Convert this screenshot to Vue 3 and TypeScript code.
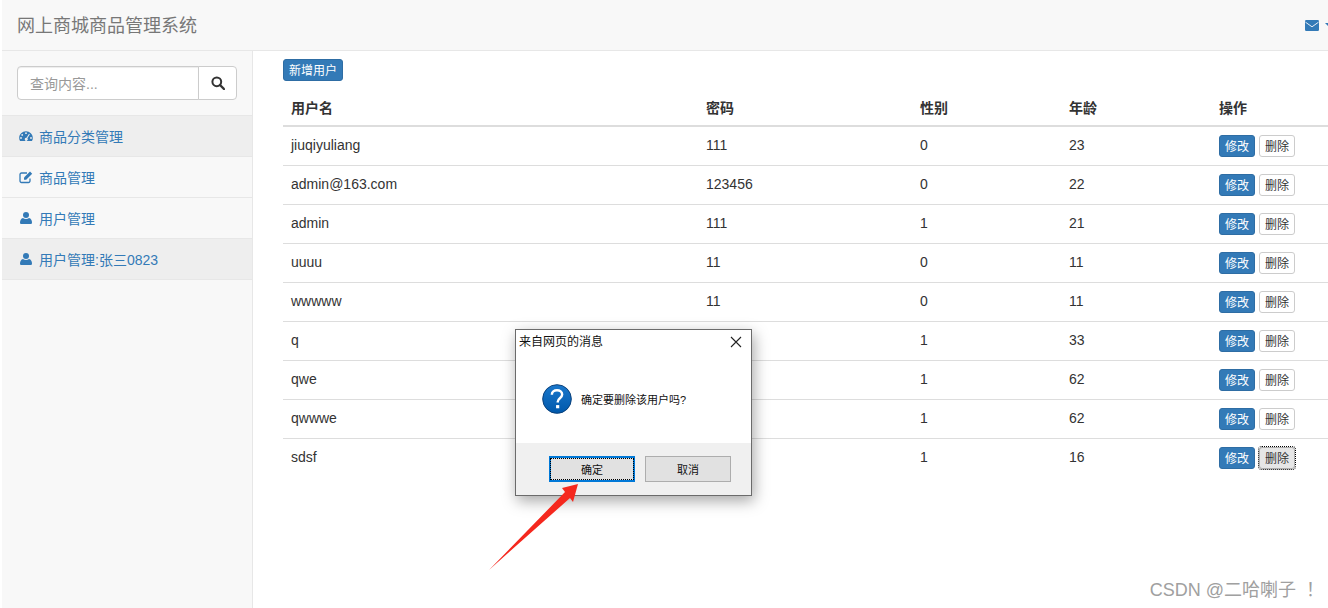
<template>
  <div class="page">
    <header class="navbar">
      <span class="brand">网上商城商品管理系统</span>
      <div class="nav-right">
        <svg class="mail-icon" width="14" height="11" viewBox="0 0 14 11">
          <rect width="14" height="11" rx="1.2" fill="#337ab7" />
          <path d="M0.5 2.2 7 6.8 13.5 2.2" fill="none" stroke="#e8eef5" stroke-width="1" />
        </svg>
        <span class="caret"></span>
      </div>
    </header>

    <div class="layout">
      <aside class="sidebar">
        <div class="search">
          <input type="text" placeholder="查询内容..." />
          <button class="search-btn" type="button">
            <svg width="14" height="14" viewBox="0 0 14 14">
              <circle cx="5.8" cy="5.8" r="4.4" fill="none" stroke="#333" stroke-width="2" />
              <path d="M9 9 13 13" stroke="#333" stroke-width="2.4" stroke-linecap="round" />
            </svg>
          </button>
        </div>
        <ul class="menu">
          <li v-for="item in menu" :key="item.label" :class="{ shaded: item.shaded }">
            <svg v-if="item.icon === 'gauge'" class="menu-icon" width="14" height="14" viewBox="0 0 14 14">
              <path
                fill-rule="evenodd"
                d="M7 2.2C3.2 2.2.2 5.200.2 8.900c0 1.200.3 2.200.9 3.100h11.800c.6-.9.9-1.900.9-3.100C13.800 5.200 10.800 2.200 7 2.200zM7 3.300a.9.9 0 1 1 0 1.800.9.9 0 0 1 0-1.800zM3.200 5a.9.9 0 1 1 0 1.800.9.9 0 0 1 0-1.800zM2 8.100a.9.9 0 1 1 0 1.800.9.9 0 0 1 0-1.800zM12 8.100a.9.900 0 1 1 0 1.800.9.9 0 0 1 0-1.800zM10 4.800l.9.400-2.500 4.100a1.500 1.500 0 1 1-.9-.5z"
                fill="#337ab7"
              />
            </svg>
            <svg v-else-if="item.icon === 'edit'" class="menu-icon" width="14" height="14" viewBox="0 0 14 14">
              <path d="M11 8.500V11a1.500 1.500 0 0 1-1.500 1.500H2.500A1.500 1.500 0 0 1 1 11V4.500A1.500 1.500 0 0 1 2.500 3H8" fill="none" stroke="#337ab7" stroke-width="1.300" />
              <path d="M5 7.500 11 1.500l2.200 2.200-6 6H5z" fill="#337ab7" />
            </svg>
            <svg v-else class="menu-icon" width="14" height="14" viewBox="0 0 14 14">
              <circle cx="7" cy="4" r="3" fill="#337ab7" />
              <path d="M2 13c-.8 0-1-.5-1-1.200C1 9.500 2 7.300 4 7c.8.700 1.800 1 3 1s2.200-.3 3-1c2 .3 3 2.500 3 4.800 0 .7-.2 1.200-1 1.200z" fill="#337ab7" />
            </svg>
            <span class="menu-label">{{ item.label }}</span>
          </li>
        </ul>
      </aside>

      <main class="main">
        <button class="btn primary add" type="button">新增用户</button>
        <table class="users">
          <colgroup>
            <col style="width: 415px" />
            <col style="width: 214px" />
            <col style="width: 149px" />
            <col style="width: 150px" />
            <col style="width: 120px" />
          </colgroup>
          <thead>
            <tr>
              <th>用户名</th>
              <th>密码</th>
              <th>性别</th>
              <th>年龄</th>
              <th>操作</th>
            </tr>
          </thead>
          <tbody>
            <tr v-for="(user, i) in users" :key="user.name">
              <td>{{ user.name }}</td>
              <td>{{ user.password }}</td>
              <td>{{ user.gender }}</td>
              <td>{{ user.age }}</td>
              <td>
                <div class="actions">
                  <button class="btn primary" type="button">修改</button>
                  <button class="btn plain" :class="{ focused: i === users.length - 1 }" type="button">删除</button>
                </div>
              </td>
            </tr>
          </tbody>
        </table>
      </main>
    </div>

    <!-- native confirm box lying over the page -->
    <div class="dialog">
      <div class="dialog-title">
        <span>来自网页的消息</span>
        <svg width="12" height="12" viewBox="0 0 12 12">
          <path d="M1 1 11 11M11 1 1 11" stroke="#222" stroke-width="1.100" />
        </svg>
      </div>
      <div class="dialog-body">
        <svg width="30" height="30" viewBox="0 0 32 32">
          <defs>
            <linearGradient id="q-fill" x1="0" y1="0" x2="0" y2="1">
              <stop offset="0" stop-color="#1a78cc" />
              <stop offset="1" stop-color="#0058ab" />
            </linearGradient>
          </defs>
          <circle cx="16" cy="16" r="15.300" fill="url(#q-fill)" stroke="#0b3f78" stroke-width="1" />
          <path d="M10.500 11.500c0-3 2.400-4.800 5.500-4.800 3.200 0 5.500 1.800 5.500 4.500 0 4-4.700 4-4.700 7.800v.8" fill="none" stroke="#fff" stroke-width="2.600" />
          <rect x="15" y="22.500" width="3.400" height="3.400" fill="#fff" />
        </svg>
        <span class="dialog-text">确定要删除该用户吗?</span>
      </div>
      <div class="dialog-footer">
        <button class="win-btn default" type="button"><span>确定</span></button>
        <button class="win-btn" type="button"><span>取消</span></button>
      </div>
    </div>

    <svg class="arrow" width="100" height="95" viewBox="0 0 100 95">
      <path d="M1 91 77 13 74 9 90 5 85 23 82 19z" fill="#f5281e" />
    </svg>

    <div class="watermark">CSDN @二哈喇子 <span class="bang">！</span></div>
  </div>
</template>

<script setup lang="ts">
interface MenuItem {
  label: string
  icon: 'gauge' | 'edit' | 'user'
  shaded: boolean
}

interface User {
  name: string
  password: string
  gender: number
  age: number
}

const menu: MenuItem[] = [
  { label: '商品分类管理', icon: 'gauge', shaded: true },
  { label: '商品管理', icon: 'edit', shaded: false },
  { label: '用户管理', icon: 'user', shaded: false },
  { label: '用户管理:张三0823', icon: 'user', shaded: true }
]

const users: User[] = [
  { name: 'jiuqiyuliang', password: '111', gender: 0, age: 23 },
  { name: 'admin@163.com', password: '123456', gender: 0, age: 22 },
  { name: 'admin', password: '111', gender: 1, age: 21 },
  { name: 'uuuu', password: '11', gender: 0, age: 11 },
  { name: 'wwwww', password: '11', gender: 0, age: 11 },
  { name: 'q', password: '11', gender: 1, age: 33 },
  { name: 'qwe', password: '11', gender: 1, age: 62 },
  { name: 'qwwwe', password: '11', gender: 1, age: 62 },
  { name: 'sdsf', password: '11', gender: 1, age: 16 }
]
</script>

<style>
html,
body {
  margin: 0;
  background: #fff;
}
</style>

<style scoped>
.page {
  position: relative;
  width: 1328px;
  height: 608px;
  padding-left: 2px;
  box-sizing: border-box;
  overflow: hidden;
  background: #fff;
  color: #333;
  font-family: "Liberation Sans", "Noto Sans CJK SC", sans-serif;
  font-size: 14px;
  line-height: 20px;
}

.navbar {
  display: flex;
  align-items: center;
  justify-content: space-between;
  height: 50px;
  padding: 0 0 0 15px;
  background: #f8f8f8;
  border-bottom: 1px solid #e7e7e7;
}

.brand {
  padding-top: 2px;
  font-size: 18px;
  color: #777;
}

.nav-right {
  display: flex;
  align-items: center;
  gap: 6px;
  margin-right: -5px;
}

.mail-icon {
  display: block;
}

.caret {
  width: 0;
  height: 0;
  border-top: 4px solid #337ab7;
  border-left: 4px solid transparent;
  border-right: 4px solid transparent;
}

.layout {
  display: flex;
  height: 557px;
}

.sidebar {
  width: 250px;
  flex: none;
  background: #f8f8f8;
  border-right: 1px solid #e7e7e7;
}

.search {
  display: flex;
  padding: 15px;
}

.search input {
  width: 182px;
  height: 34px;
  box-sizing: border-box;
  padding: 7px 12px 5px;
  border: 1px solid #ccc;
  border-radius: 4px 0 0 4px;
  outline: none;
  background: #fff;
  color: #555;
  font: inherit;
  box-shadow: inset 0 1px 1px rgba(0, 0, 0, 0.075);
}

.search input::placeholder {
  color: #999;
}

.search-btn {
  display: flex;
  align-items: center;
  justify-content: center;
  width: 39px;
  height: 34px;
  margin-left: -1px;
  padding: 0;
  border: 1px solid #ccc;
  border-radius: 0 4px 4px 0;
  background: #fff;
}

.menu {
  margin: 0;
  padding: 0;
  list-style: none;
  border-top: 1px solid #e7e7e7;
}

.menu li {
  display: flex;
  align-items: center;
  gap: 6px;
  height: 40px;
  padding-left: 17px;
  border-bottom: 1px solid #e7e7e7;
  color: #337ab7;
}

.menu li.shaded {
  background: #eee;
}

.menu-icon {
  flex: none;
}

.menu-label {
  padding-top: 2px;
}

.main {
  flex: 1;
  min-width: 0;
  padding: 8px 0 0 30px;
}

.btn {
  display: block;
  height: 22px;
  box-sizing: border-box;
  padding: 2px 5px 0;
  border: 1px solid transparent;
  border-radius: 3px;
  font: inherit;
  font-size: 12px;
  line-height: 18px;
}

.btn.primary {
  background: #337ab7;
  border-color: #2e6da4;
  color: #fff;
}

.btn.plain {
  background: #fff;
  border-color: #ccc;
  color: #333;
}

.btn.focused {
  background: #e6e6e6;
  border-color: #adadad;
  outline: 1px dotted #000;
}

.add {
  margin-bottom: 8px;
}

.users {
  width: 1048px;
  border-collapse: separate;
  border-spacing: 0;
  table-layout: fixed;
}

.users th,
.users td {
  padding: 8px;
  text-align: left;
  vertical-align: top;
}

.users th {
  padding: 9px 8px 7px;
  border-bottom: 2px solid #ddd;
  font-weight: bold;
}

.users td {
  border-bottom: 1px solid #ddd;
}

.users tr:last-child td {
  border-bottom: none;
}

.actions {
  display: flex;
  gap: 4px;
}

.dialog {
  position: absolute;
  left: 515px;
  top: 329px;
  display: flex;
  flex-direction: column;
  width: 237px;
  height: 167px;
  box-sizing: border-box;
  border: 1px solid #6b6b6b;
  background: #fff;
  color: #111;
  box-shadow: 2px 5px 14px rgba(0, 0, 0, 0.35);
}

.dialog-title {
  display: flex;
  align-items: center;
  justify-content: space-between;
  height: 22px;
  box-sizing: border-box;
  padding: 2px 9px 0 3px;
  font-size: 12px;
}

.dialog-body {
  display: flex;
  align-items: center;
  flex: 1;
  gap: 9px;
  padding: 3px 0 0 26px;
  font-size: 11px;
}

.dialog-text {
  padding-top: 2px;
}

.dialog-footer {
  display: flex;
  gap: 10px;
  height: 52px;
  box-sizing: border-box;
  padding: 13px 0 0 33px;
  background: #f0f0f0;
}

.win-btn {
  width: 86px;
  height: 26px;
  box-sizing: border-box;
  padding: 1px 0 0;
  border: 1px solid #adadad;
  background: #e1e1e1;
  color: #111;
  font: inherit;
  font-size: 11px;
  line-height: 20px;
}

.win-btn.default {
  padding: 0;
  border: 2px solid #0078d7;
}

.win-btn.default span {
  display: flex;
  align-items: center;
  justify-content: center;
  height: 20px;
  padding-top: 2px;
  box-sizing: border-box;
  outline: 1px dotted #000;
}

.arrow {
  position: absolute;
  left: 488px;
  top: 479px;
}

.watermark {
  position: absolute;
  right: 4px;
  top: 578px;
  color: #a0a0a0;
  font-size: 18px;
  line-height: 24px;
  white-space: nowrap;
}

.bang {
  margin-left: 5px;
}
</style>
